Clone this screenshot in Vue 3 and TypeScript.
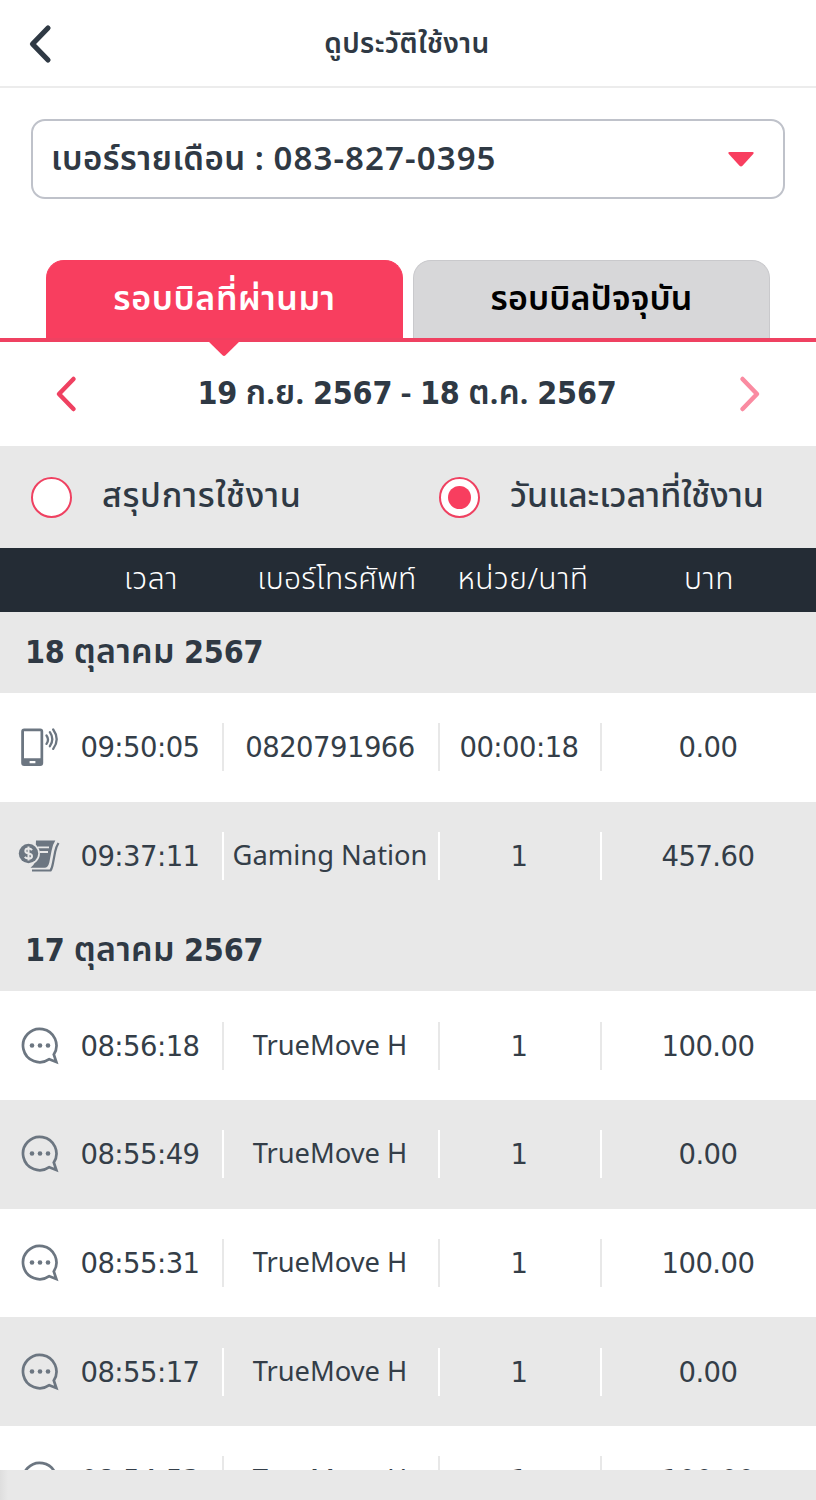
<script setup lang="ts">
type Kind = 'call' | 'pay' | 'chat'
interface Entry { kind: Kind; time: string; target: string; unit: string; baht: string }
interface Group { day: string; month: string; year: string; entries: Entry[] }

const chat = (time: string, baht: string): Entry => ({ kind: 'chat', time, target: 'TrueMove H', unit: '1', baht })
const groups: Group[] = [
  {
    day: '18', month: 'ตุลาคม', year: '2567',
    entries: [
      { kind: 'call', time: '09:50:05', target: '0820791966', unit: '00:00:18', baht: '0.00' },
      { kind: 'pay', time: '09:37:11', target: 'Gaming Nation', unit: '1', baht: '457.60' },
    ],
  },
  {
    day: '17', month: 'ตุลาคม', year: '2567',
    entries: [
      chat('08:56:18', '100.00'),
      chat('08:55:49', '0.00'),
      chat('08:55:31', '100.00'),
      chat('08:55:17', '0.00'),
      chat('08:54:53', '100.00'),
    ],
  },
]
const isNumber = (s: string) => /^[\d:.]+$/.test(s)
</script>

<template>
  <div class="page">
    <header class="top">
      <svg class="back" width="24" height="40" viewBox="0 0 24 40"><path d="M20 4 4.500 20 20 36" /></svg>
      <h1 class="title">ดูประวัติใช้งาน</h1>
    </header>

    <div class="select">
      <span class="select-text">เบอร์รายเดือน : <span class="select-num">083-827-0395</span></span>
      <svg width="28" height="17" viewBox="0 0 28 17"><path d="M2.500 1h23q2 .3.700 2L15.500 14.800q-1.500 1.300-3 0L1.800 3Q.500 1.300 2.500 1Z" fill="#f83e5f" /></svg>
    </div>

    <nav class="tabs">
      <div class="tab active"><span class="tab-past">รอบบิลที่ผ่านมา</span>
        <svg class="pointer" width="34" height="18" viewBox="0 0 34 18"><path d="M0 0h34L18.500 15.300q-1.500 1.400-3 0Z" fill="#f83e5f" /></svg>
      </div>
      <div class="tab"><span class="tab-now">รอบบิลปัจจุบัน</span></div>
    </nav>

    <div class="period">
      <svg width="22" height="38" viewBox="0 0 22 38"><path d="M18.500 4 4 19l14.500 15" stroke="#ef4161" /></svg>
      <span class="period-text"><b class="n">19</b> ก.ย. <b class="n">2567</b> - <b class="n">18</b> ต.ค. <b class="n">2567</b></span>
      <svg width="22" height="38" viewBox="0 0 22 38"><path d="M3.500 4 18 19 3.500 34" stroke="#fa8ba1" /></svg>
    </div>

    <div class="filter">
      <label class="option"><i class="radio"></i><span class="opt-a">สรุปการใช้งาน</span></label>
      <label class="option"><i class="radio on"></i><span class="opt-b">วันและเวลาที่ใช้งาน</span></label>
    </div>

    <div class="thead">
      <span class="h1">เวลา</span><span class="h2">เบอร์โทรศัพท์</span><span class="h3">หน่วย/นาที</span><span class="h4">บาท</span>
    </div>

    <main class="list">
      <section v-for="g in groups" :key="g.day">
        <h2 class="date"><span><b class="n">{{ g.day }}</b> {{ g.month }} <b class="n">{{ g.year }}</b></span></h2>
        <div v-for="e in g.entries" :key="e.time" class="row">
          <div class="icon">
            <svg v-if="e.kind === 'call'" width="40" height="40" viewBox="0 0 40 40">
              <path fill="#6c7681" fill-rule="evenodd" d="M4.200 1.500h16a3 3 0 0 1 3 3v31.500a3 3 0 0 1-3 3h-16a3 3 0 0 1-3-3V4.500a3 3 0 0 1 3-3ZM4 4.300v26.900h16.500V4.300ZM9.600 34v2.200h5.800V34Z" />
              <g fill="none" stroke="#6c7681" stroke-width="2.300" stroke-linecap="round">
                <path d="M26.500 8.500q3 4.200 0 8.400M29.900 5.200q4.800 7 0 14M33.200 2.500q7 9.700 0 19.400" />
              </g>
            </svg>
            <svg v-else-if="e.kind === 'pay'" width="42" height="34" viewBox="0 0 42 34">
              <path fill="#6c7681" d="M18 1.500H37.300Q34.600 5.500 33.500 12L31.300 23.500Q30 28.800 26.500 28.800H12.500Q15.500 27 17 23Z" />
              <path fill="none" stroke="#6c7681" stroke-width="2.200" stroke-linejoin="round" d="M14 31.500h18.500Q34 29.500 35 24L37.200 12.500Q38 8 40.500 4" />
              <path stroke="#e8e8e8" stroke-width="1.800" d="M20 8.300h11M21.500 13h8.500" />
              <circle cx="10.500" cy="14.500" r="11.400" fill="#e8e8e8" />
              <circle cx="10.500" cy="14.500" r="9.700" fill="#6c7681" />
              <path fill="none" stroke="#e8e8e8" stroke-width="2" d="M14 11.200q-1-1.700-3.500-1.700-3.200 0-3.200 2.400 0 2 3.200 2.600 3.500.5 3.500 2.700 0 2.400-3.500 2.400-2.600 0-3.700-1.700M10.500 7.500v14" />
            </svg>
            <svg v-else width="40" height="40" viewBox="0 0 40 40">
              <path fill="none" stroke="#6c7681" stroke-width="2.700" stroke-linejoin="miter" d="M33.800 28.500A16.700 16.700 0 1 0 29.300 33.200L36.300 36Z" />
              <g fill="#6c7681"><circle cx="12" cy="19.500" r="2.300" /><circle cx="20" cy="19.500" r="2.300" /><circle cx="28" cy="19.500" r="2.300" /></g>
            </svg>
          </div>
          <span class="cell num">{{ e.time }}</span>
          <span class="cell" :class="isNumber(e.target) ? 'num' : 'name'">{{ e.target }}</span>
          <span class="cell num">{{ e.unit }}</span>
          <span class="cell num">{{ e.baht }}</span>
        </div>
      </section>
    </main>
    <footer class="foot"></footer>
  </div>
</template>

<style>
body { margin: 0; background: #fff; }
</style>

<style scoped>
.page {
  width: 816px; height: 1500px; overflow: hidden; display: flex; flex-direction: column;
  font-family: "Noto Sans", "Noto Sans Thai", "DejaVu Sans", sans-serif; color: #2f3944; background: #fff;
}
.page > * { flex-shrink: 0; box-sizing: border-box; }
span, h1 { white-space: nowrap; }
.top { height: 88px; border-bottom: 2px solid #ececec; display: grid; grid-template-columns: 80px 1fr 82px; align-items: center; }
.back { margin-left: 27.500px; margin-top: 2px; }
.back path { fill: none; stroke: #2f3944; stroke-width: 5.200; stroke-linecap: round; stroke-linejoin: round; }
.title { margin: 2px 0 0; text-align: center; font-size: 28px; font-weight: 600; letter-spacing: .4px; }
.select {
  margin: 31px 31px 0; height: 80px; border: 2px solid #bfc2ca; border-radius: 14px; display: flex;
  align-items: center; justify-content: space-between; padding: 0 28px 0 18px;
}
.select-text { font-size: 33px; font-weight: 600; letter-spacing: .5px; margin-top: 2px; }
.select-num { letter-spacing: 1.100px; }
.tabs { margin-top: 61px; height: 82px; padding: 0 46px; display: flex; gap: 10px; border-bottom: 4px solid #ef4161; }
.tab {
  position: relative; flex: 1; box-sizing: border-box; border-radius: 18px 18px 0 0; background: #d7d7d9; color: #000;
  border: 1px solid #c9c9cc; border-bottom: 0; display: flex; justify-content: center; align-items: center;
  font-size: 34px; font-weight: 600;
}
.tab.active { background: #f83e5f; border-color: #f83e5f; color: #fff; }
.tab-past { letter-spacing: .6px; }
.tab-now { letter-spacing: .1px; }
.pointer { position: absolute; left: 160px; top: 79px; }
.period { height: 104px; padding: 0 55px; display: flex; align-items: center; justify-content: space-between; }
.period svg path { fill: none; stroke-width: 4.500; stroke-linecap: round; stroke-linejoin: round; }
.period-text { font-size: 33px; font-weight: 600; margin-left: -2px; }
.n { font-family: "DejaVu Sans Condensed", "DejaVu Sans", sans-serif; font-weight: 700; font-size: 32px; letter-spacing: -.2px; }
.filter { height: 102px; background: #e8e8e8; display: grid; grid-template-columns: 408px 408px; }
.option { display: flex; align-items: center; gap: 30px; padding-left: 31px; font-size: 34px; font-weight: 500; }
.option span { margin-top: -2px; }
.opt-a { letter-spacing: .7px; }
.radio { width: 41px; height: 41px; box-sizing: border-box; border: 2px solid #ef4161; border-radius: 50%; background: #fff; display: grid; place-items: center; }
.radio.on::after { content: ""; width: 23px; height: 23px; border-radius: 50%; background: #f83e5f; }
.thead {
  height: 64px; background: #242c35; color: #fff; display: grid; grid-template-columns: 79px 144px 228px 144px 228px;
  align-items: center; text-align: center; font-size: 30px; font-weight: 300; letter-spacing: .5px;
}
.h1 { grid-column: 2; }
.h2 { letter-spacing: .3px; }
.list { height: 858px; overflow: hidden; }
.date { margin: 0; height: 81px; background: #e8e8e8; display: flex; align-items: center; padding-left: 25px; font-size: 34px; font-weight: 600; letter-spacing: .3px; }
.row { height: 108.700px; display: grid; grid-template-columns: 60px 164px 216px 162px 214px; align-items: center; text-align: center; --rule: #e8e8e8; color: #343e48; }
.row:nth-child(odd) { background: #e8e8e8; --rule: #fff; }
.icon { display: grid; justify-content: end; }
.cell { height: 48px; line-height: 48px; box-sizing: border-box; border-right: 2px solid var(--rule); padding-right: 2px; }
.cell:last-child { border: 0; }
.num { font-family: "DejaVu Sans", sans-serif; font-size: 27.500px; letter-spacing: -.550px; line-height: 48px; }
.name { font-size: 27.300px; line-height: 46px; }
.foot { height: 30px; background: linear-gradient(90deg, #dedede, #e8e8e8 8px); }
</style>
